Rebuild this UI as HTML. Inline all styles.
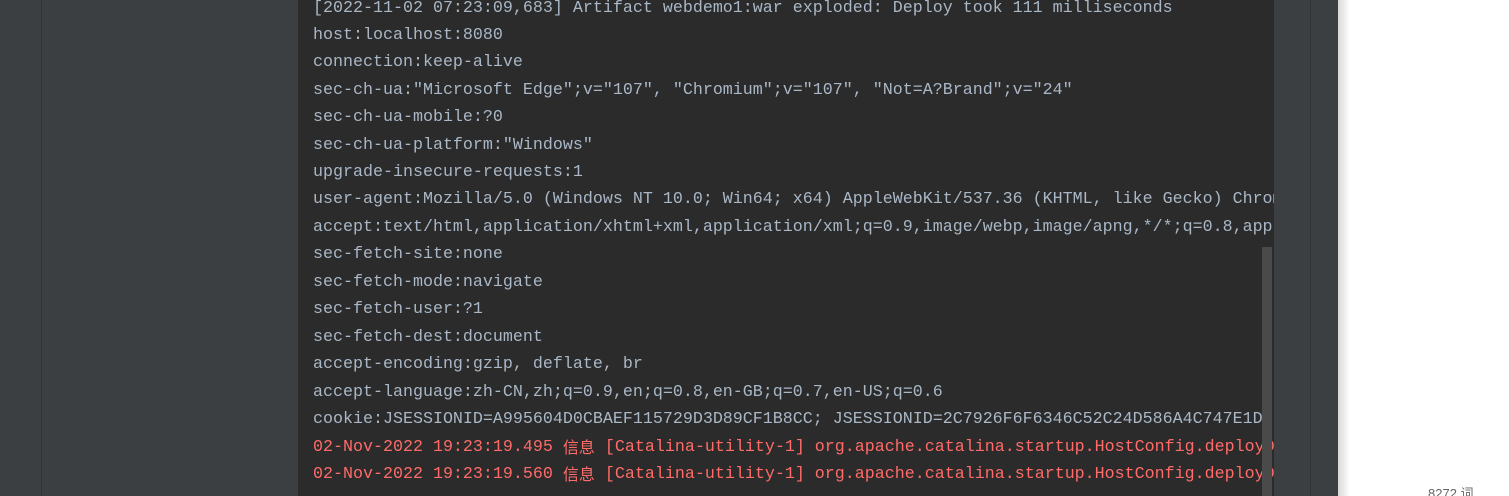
<!DOCTYPE html>
<html style="overflow:hidden;width:1509px;height:496px"><head><meta charset="utf-8"><style>
body{margin:0;width:1509px;height:496px;overflow:hidden;background:#fff;position:relative;font-family:"Liberation Mono","Noto Sans CJK SC",monospace}
.p{position:absolute;top:0;height:496px}
.l{position:absolute;left:313px;font-size:16.66px;line-height:20px;height:20px;color:#a9b7c6;white-space:pre}
.r{color:#ff6b68}
.c{font-family:"Noto Sans CJK SC",sans-serif;font-size:16px;line-height:20px;vertical-align:top;position:relative;top:-2px}
</style></head><body>
<div class="p" style="left:0;width:41px;background:#3c3f41"></div>
<div class="p" style="left:41px;width:1px;background:#313335"></div>
<div class="p" style="left:42px;width:256px;background:#3c3f41"></div>
<div class="p" style="left:298px;width:976px;background:#2b2b2b"></div>
<div style="position:absolute;left:0;top:0;width:1274px;height:496px;overflow:hidden">
<div class="l" style="top:-1px">[2022-11-02 07:23:09,683] Artifact webdemo1:war exploded: Deploy took 111 milliseconds</div>
<div class="l" style="top:26px">host:localhost:8080</div>
<div class="l" style="top:53px">connection:keep-alive</div>
<div class="l" style="top:81px">sec-ch-ua:"Microsoft Edge";v="107", "Chromium";v="107", "Not=A?Brand";v="24"</div>
<div class="l" style="top:108px">sec-ch-ua-mobile:?0</div>
<div class="l" style="top:136px">sec-ch-ua-platform:"Windows"</div>
<div class="l" style="top:163px">upgrade-insecure-requests:1</div>
<div class="l" style="top:190px">user-agent:Mozilla/5.0 (Windows NT 10.0; Win64; x64) AppleWebKit/537.36 (KHTML, like Gecko) Chrome/107.0</div>
<div class="l" style="top:218px">accept:text/html,application/xhtml+xml,application/xml;q=0.9,image/webp,image/apng,*/*;q=0.8,application</div>
<div class="l" style="top:245px">sec-fetch-site:none</div>
<div class="l" style="top:273px">sec-fetch-mode:navigate</div>
<div class="l" style="top:300px">sec-fetch-user:?1</div>
<div class="l" style="top:328px">sec-fetch-dest:document</div>
<div class="l" style="top:355px">accept-encoding:gzip, deflate, br</div>
<div class="l" style="top:383px">accept-language:zh-CN,zh;q=0.9,en;q=0.8,en-GB;q=0.7,en-US;q=0.6</div>
<div class="l" style="top:410px">cookie:JSESSIONID=A995604D0CBAEF115729D3D89CF1B8CC; JSESSIONID=2C7926F6F6346C52C24D586A4C747E1D</div>
<div class="l r" style="top:438px">02-Nov-2022 19:23:19.495 <span class="c">信息</span> [Catalina-utility-1] org.apache.catalina.startup.HostConfig.deployDirectory</div>
<div class="l r" style="top:465px">02-Nov-2022 19:23:19.560 <span class="c">信息</span> [Catalina-utility-1] org.apache.catalina.startup.HostConfig.deployDirectory</div>
</div>
<div class="p" style="left:1262px;top:247px;width:10px;height:249px;background:#4a4a4a"></div>
<div class="p" style="left:1274px;width:36px;background:#3c3f41"></div>
<div class="p" style="left:1310px;width:1px;background:#313335"></div>
<div class="p" style="left:1311px;width:27px;background:#3c3f41"></div>
<div class="p" style="left:1338px;width:12px;background:linear-gradient(to right,#d8d8d8,#fff)"></div>
<div style="position:absolute;left:1428px;top:486px;height:10px;overflow:hidden;font-family:'Liberation Sans','Noto Sans CJK SC',sans-serif;font-size:13px;line-height:16px;color:#666">8272 词</div>
</body></html>
